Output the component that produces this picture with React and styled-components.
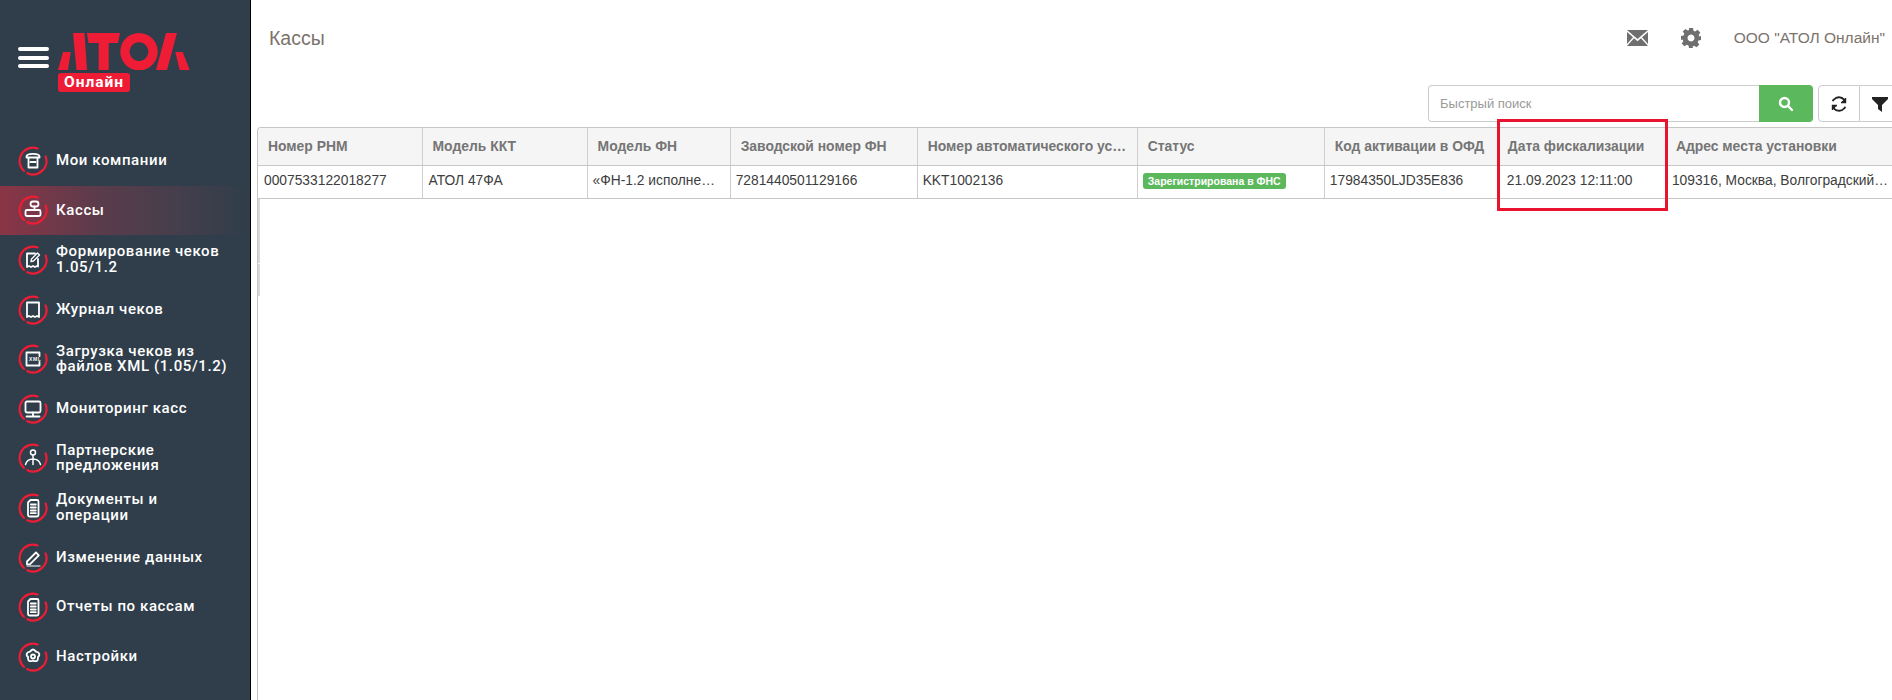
import styled, { createGlobalStyle } from "styled-components";

const GlobalStyle = createGlobalStyle`
  html, body {
    margin: 0;
    padding: 0;
    background: #fff;
  }
  * {
    box-sizing: border-box;
  }
`;

const Layout = styled.div`
  display: flex;
  width: 1892px;
  height: 700px;
  overflow: hidden;
`;

const Sidebar = styled.aside`
  flex: 0 0 251px;
  height: 700px;
  background: #2f3e4a;
  border-right: 1px solid #000;
  font-family: Roboto, "Liberation Sans", sans-serif;
`;

const Brand = styled.div`
  display: flex;
  align-items: flex-start;
  height: 136px;
  padding: 33px 0 0 18px;
`;

const Burger = styled.div`
  display: flex;
  flex-direction: column;
  gap: 4.5px;
  width: 31px;
  margin: 14px 9px 0 0;
`;

const BurgerBar = styled.span`
  height: 4px;
  border-radius: 2px;
  background: #fff;
`;

const LogoColumn = styled.div`
  display: flex;
  flex-direction: column;
  align-items: flex-start;
`;

const Online = styled.div`
  margin-top: 3px;
  padding: 0 6px;
  height: 19px;
  line-height: 19px;
  border-radius: 3px;
  background: #ee1c35;
  color: #fff;
  font-size: 15.5px;
  font-weight: 700;
  letter-spacing: 1px;
`;

const Nav = styled.nav`
  display: flex;
  flex-direction: column;
`;

const NavItem = styled.div`
  display: flex;
  align-items: center;
  gap: 8px;
  height: 49.6px;
  padding-left: 18px;
  color: #fff;
  font-size: 15px;
  font-weight: 500;
  line-height: 15.5px;
  letter-spacing: 0.6px;
  background: ${(p) =>
    p.$active
      ? "linear-gradient(90deg, #8a3546 0%, #5a3c4b 40%, #463e4c 70%, #2f3e4a 100%)"
      : "transparent"};
`;

const NavLabel = styled.span`
  max-width: 174px;
`;

const Main = styled.main`
  flex: 1;
  min-width: 0;
  display: flex;
  flex-direction: column;
  font-family: "Liberation Sans", Arial, sans-serif;
`;

const TopBar = styled.header`
  display: flex;
  align-items: center;
  height: 75px;
  padding-left: 18px;
  color: #7b736c;
`;

const Title = styled.h1`
  flex: 1;
  margin: 2px 0 0;
  font-size: 19.5px;
  font-weight: 400;
`;

const TopIcon = styled.span`
  display: flex;
  margin-right: ${(p) => p.$gap}px;
  color: #6f6f6f;
`;

const Account = styled.span`
  margin-right: 7px;
  font-size: 15.5px;
  white-space: nowrap;
`;

const Toolbar = styled.div`
  display: flex;
  justify-content: flex-end;
  height: 37px;
  margin: 10px 0 5px;
`;

const SearchInput = styled.div`
  display: flex;
  align-items: center;
  width: 331px;
  padding-left: 11px;
  border: 1px solid #ccc;
  border-right: 0;
  border-radius: 4px 0 0 4px;
  color: #999;
  font-size: 13px;
`;

const SearchButton = styled.div`
  display: flex;
  align-items: center;
  justify-content: center;
  width: 54px;
  margin-right: 5px;
  background: #5cb85c;
  border-radius: 0 4px 4px 0;
`;

const ToolButton = styled.div`
  display: flex;
  align-items: center;
  justify-content: center;
  flex: 0 0 ${(p) => p.$width}px;
  margin-right: ${(p) => p.$overhang || 0}px;
  border: 1px solid #ccc;
  border-left-width: ${(p) => (p.$joined ? 0 : 1)}px;
  border-radius: ${(p) => (p.$joined ? "0" : "4px 0 0 4px")};
  color: #222;
`;

const TableFrame = styled.div`
  position: relative;
  flex: 1;
  min-height: 0;
  margin-left: 6px;
`;

const TableClip = styled.div`
  height: 100%;
  overflow: hidden;
  border-left: 1px solid #c6c6c6;
  border-top: 1px solid #c6c6c6;
  border-top-left-radius: 4px;
`;

const Table = styled.table`
  table-layout: fixed;
  width: 1636px;
  border-collapse: collapse;
  color: #3d3d3d;
`;

const HeadCell = styled.th`
  height: 37px;
  padding: 0 9px 0 10px;
  overflow: hidden;
  background: #f5f5f5;
  border-right: 1px solid #cfcfcf;
  border-bottom: 1px solid #c6c6c6;
  color: #757575;
  font-size: 13.9px;
  font-weight: 700;
  text-align: left;
  white-space: nowrap;
  text-overflow: ellipsis;
`;

const Cell = styled.td`
  height: 33px;
  padding: 0 ${(p) => p.$end ?? 9}px 2px ${(p) => p.$pad}px;
  overflow: hidden;
  border-right: 1px solid #cfcfcf;
  border-bottom: 1px solid #c6c6c6;
  font-size: 13.8px;
  white-space: nowrap;
  text-overflow: ellipsis;
`;

const GutterCell = styled.td`
  height: 33px;
  padding: 0;
  background: linear-gradient(#d9d9d9, #d9d9d9) left top / 2px 32px no-repeat;
`;

const StatusBadge = styled.span`
  display: inline-block;
  padding: 0 5px;
  height: 16px;
  line-height: 16px;
  border-radius: 3px;
  background: #5cb85c;
  color: #fff;
  font-size: 10.5px;
  font-weight: 700;
`;

const Highlight = styled.div`
  position: absolute;
  left: 1240px;
  top: -8px;
  width: 171px;
  height: 92px;
  border: 3px solid #e8132f;
  pointer-events: none;
`;

const Ring = ({ children }) => (
  <svg width="30" height="30" viewBox="0 0 30 30" fill="none" style={{ flex: "0 0 30px" }}>
    <g stroke="#ee1c35" strokeWidth="2.2" strokeLinecap="round">
      <path d="M6.04 24.96A13.4 13.4 0 0 1 19.58 2.41" />
      <path d="M27.6 10.42A13.4 13.4 0 0 1 9.34 27.14" />
    </g>
    <g stroke="#fff" strokeWidth="1.8" strokeLinecap="round" strokeLinejoin="round">
      {children}
    </g>
  </svg>
);

const DocGlyph = () => (
  <>
    <path d="M10 9.500l2.500-2.500H19a1.500 1.500 0 0 1 1.500 1.500v13.500a1.500 1.500 0 0 1-1.500 1.500H11.500a1.500 1.500 0 0 1-1.500-1.500z" />
    <path d="M12.800 11.500h5M12.800 14.500h5M12.800 17.500h5M12.800 20.200h5" />
  </>
);

const icons = {
  companies: (
    <>
      <path d="M8.500 10.500c0-3.500 13-3.500 13 0v1h-13z" />
      <path d="M10.500 12v9.500h9V12M12.500 16h5" />
    </>
  ),
  registers: (
    <>
      <rect x="12.500" y="6.500" width="8" height="5" rx="2.500" />
      <path d="M16.500 11.500v3" />
      <rect x="7.500" y="15" width="15" height="6" rx="1.500" />
    </>
  ),
  receipts: (
    <>
      <path d="M17 8.500H9v13.500l2-1 2 1 2-1 2 1 2-1 1 .5V14" />
      <path d="M13 16.500l.5-2.500 6-6 2 2-6 6z" strokeWidth="1.300" />
    </>
  ),
  journal: <path d="M9 7.500h12v14.500l-2-1-2 1-2-1-2 1-2-1-2 1z" />,
  upload: (
    <>
      <path d="M21.500 12V8.500h-13v13h13V18" />
      <text x="11" y="17" fontSize="5" fontWeight="700" fill="#fff" stroke="none" fontFamily="Liberation Sans">
        XML
      </text>
    </>
  ),
  monitoring: (
    <>
      <rect x="7.500" y="7.500" width="15" height="11" rx="1.500" />
      <path d="M15 18.500v3M8.500 22.500h13" />
    </>
  ),
  partners: (
    <>
      <circle cx="15" cy="9.500" r="2.500" strokeWidth="1.500" />
      <path d="M15 12v4M7.500 21.500c1-3.500 3.500-5.500 7.500-5.500s6.500 2 7.500 5.500M15 16v5.500" strokeWidth="1.500" />
    </>
  ),
  documents: <DocGlyph />,
  edit: (
    <>
      <path d="M9 18.500L18 9.500l2.800 2.800-9 9H9z" />
      <path d="M9 23h13" strokeWidth="1.300" stroke="#b9bec3" />
    </>
  ),
  settings: (
    <>
      <path d="M15 7.500c1.500 0 2.300 1.200 3 2.200 1.300.2 2.800.6 3.300 2 .4 1.400-.5 2.500-1.300 3.300.1 1.300.2 2.900-1 3.800-1.200.8-2.700.3-4-.2-1.300.5-2.800 1-4 .2-1.200-.9-1.100-2.500-1-3.800-.8-.8-1.700-1.900-1.300-3.300.5-1.400 2-1.800 3.300-2 .7-1 1.500-2.200 3-2.200z" />
      <circle cx="15" cy="14.500" r="2" />
    </>
  ),
};

const menu = [
  { icon: "companies", label: "Мои компании" },
  { icon: "registers", label: "Кассы", active: true },
  { icon: "receipts", label: "Формирование чеков 1.05/1.2" },
  { icon: "journal", label: "Журнал чеков" },
  { icon: "upload", label: "Загрузка чеков из файлов XML (1.05/1.2)" },
  { icon: "monitoring", label: "Мониторинг касс" },
  { icon: "partners", label: "Партнерские предложения" },
  { icon: "documents", label: "Документы и операции" },
  { icon: "edit", label: "Изменение данных" },
  { icon: "documents", label: "Отчеты по кассам" },
  { icon: "settings", label: "Настройки" },
];

const columns = [
  { title: "Номер РНМ", width: 164, value: "0007533122018277", pad: 6 },
  { title: "Модель ККТ", width: 165, value: "АТОЛ 47ФА", pad: 6 },
  { title: "Модель ФН", width: 143, value: "«ФН-1.2 исполнение 15 кл»", pad: 5 },
  { title: "Заводской номер ФН", width: 187, value: "7281440501129166", pad: 5 },
  { title: "Номер автоматического устройства", width: 220, value: "KKT1002136", pad: 5 },
  { title: "Статус", width: 187, badge: "Зарегистрирована в ФНС", pad: 5 },
  { title: "Код активации в ОФД", width: 173, value: "17984350LJD35E836", pad: 5 },
  { title: "Дата фискализации", width: 168, value: "21.09.2023 12:11:00", pad: 9 },
  { title: "Адрес места установки", width: 228, value: "109316, Москва, Волгоградский проспект", pad: 6, end: 3 },
];

const Logo = () => (
  <svg width="132" height="37" viewBox="0 0 132 37" fill="#ee1c35">
    <path d="M0 37L5 19H12.700L10 37z" />
    <path d="M15 0H26.500L29 37H18.500z" />
    <path d="M29 0H62L60 10H50.700V37H40.700V10H30.500z" />
    <path fillRule="evenodd" d="M81 0a18.700 18.700 0 1 0 .01 0zM81 9.200a9.400 9.400 0 1 1-.01 0z" />
    <path d="M98 37H109L119 0H108z" />
    <path d="M117.300 19H124.700L131.700 37H121.700z" />
  </svg>
);

const App = () => {
  return (
    <Layout>
      <GlobalStyle />
      <Sidebar>
        <Brand>
          <Burger>
            <BurgerBar />
            <BurgerBar />
            <BurgerBar />
          </Burger>
          <LogoColumn>
            <Logo />
            <Online>Онлайн</Online>
          </LogoColumn>
        </Brand>
        <Nav>
          {menu.map((item) => (
            <NavItem key={item.label} $active={item.active}>
              <Ring>{icons[item.icon]}</Ring>
              <NavLabel>{item.label}</NavLabel>
            </NavItem>
          ))}
        </Nav>
      </Sidebar>
      <Main>
        <TopBar>
          <Title>Кассы</Title>
          <TopIcon $gap={33}>
            <svg width="21" height="16" viewBox="0 0 21 16" fill="currentColor">
              <path d="M0 0h21L10.500 9z" />
              <path d="M0 2l6 5.200L0 14zM21 2l-6 5.200 6 6.800zM7 8.200l3.500 3 3.500-3L21 16H0z" />
            </svg>
          </TopIcon>
          <TopIcon $gap={33}>
            <svg width="20" height="20" viewBox="0 0 20 20" fill="currentColor">
              <path
                fillRule="evenodd"
                d="M8 0h4l.5 2.700 1.700.7 2.300-1.600 2.800 2.800-1.600 2.300.7 1.700L20 8v4l-2.600.5-.7 1.700 1.600 2.300-2.800 2.800-2.300-1.600-1.700.7L12 20H8l-.5-2.600-1.700-.7-2.300 1.600-2.800-2.800 1.600-2.300-.7-1.700L0 12V8l2.600-.5.7-1.700-1.600-2.300L4.500 1l2.300 1.600 1.200-.5zM10 6.500a3.500 3.500 0 1 0 .01 0z"
              />
            </svg>
          </TopIcon>
          <Account>ООО "АТОЛ Онлайн"</Account>
        </TopBar>
        <Toolbar>
          <SearchInput>Быстрый поиск</SearchInput>
          <SearchButton>
            <svg width="16" height="16" viewBox="0 0 16 16" fill="none" stroke="#fff" strokeWidth="2.400" strokeLinecap="round">
              <circle cx="6.500" cy="6.500" r="4.500" />
              <path d="M10 10l4 4" />
            </svg>
          </SearchButton>
          <ToolButton $width={42}>
            <svg width="16" height="16" viewBox="0 0 16 16" fill="none" stroke="currentColor" strokeWidth="1.800">
              <path d="M14 5.500A6.500 6.500 0 0 0 3 3.500L1.500 5" />
              <path d="M2 10.500A6.500 6.500 0 0 0 13 12.500L14.500 11" />
              <path d="M14.500 2v4.500H10M1.500 14v-4.500H6" strokeWidth="1.400" fill="currentColor" />
            </svg>
          </ToolButton>
          <ToolButton $width={40} $joined $overhang={-8}>
            <svg width="16" height="16" viewBox="0 0 16 16" fill="currentColor">
              <path d="M0 1h16v2l-6 6v7l-4-3V9L0 3z" />
            </svg>
          </ToolButton>
        </Toolbar>
        <TableFrame>
          <TableClip>
            <Table>
              <colgroup>
                {columns.map((col) => (
                  <col key={col.title} style={{ width: col.width }} />
                ))}
              </colgroup>
              <thead>
                <tr>
                  {columns.map((col) => (
                    <HeadCell key={col.title}>{col.title}</HeadCell>
                  ))}
                </tr>
              </thead>
              <tbody>
                <tr>
                  {columns.map((col) => (
                    <Cell key={col.title} $pad={col.pad} $end={col.end}>
                      {col.badge ? <StatusBadge>{col.badge}</StatusBadge> : col.value}
                    </Cell>
                  ))}
                </tr>
                {[0, 1, 2].map((row) => (
                  <tr key={row}>
                    <GutterCell colSpan={columns.length} />
                  </tr>
                ))}
              </tbody>
            </Table>
          </TableClip>
          <Highlight />
        </TableFrame>
      </Main>
    </Layout>
  );
};

export default App;
